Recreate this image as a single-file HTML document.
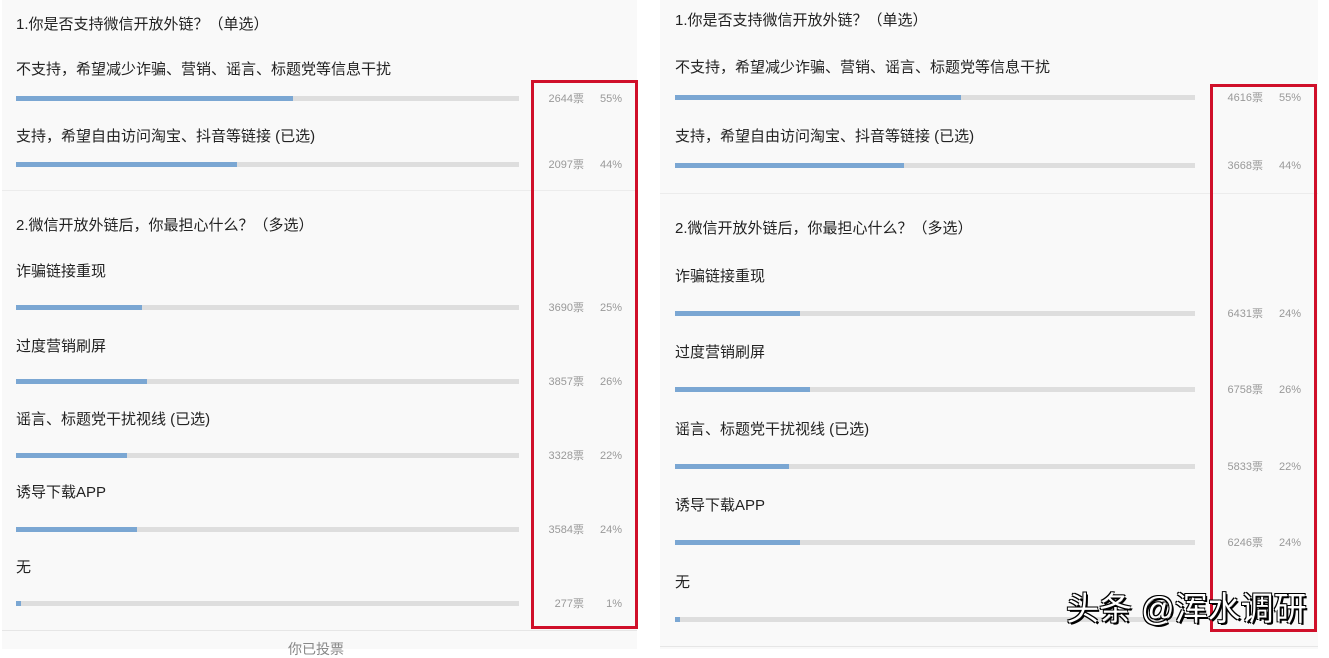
<!DOCTYPE html><html><head><meta charset="utf-8"><style>
body{margin:0;width:1329px;height:649px;background:#fff;position:relative;overflow:hidden;font-family:"Liberation Sans","Noto Sans CJK SC",sans-serif}
.p{position:absolute;background:#f9f9f9;top:0;height:649px}
.t{position:absolute;font-size:15px;color:#222;line-height:18px;white-space:nowrap}
.b{position:absolute;height:5px;background:#dedede}
.b i{display:block;height:5px;background:#7ba7d3}
.s{position:absolute;font-size:11px;color:#999;white-space:nowrap;line-height:12px;width:80px}
.s span{position:absolute;top:0}
.s .c{right:38px}.s .q{right:0}
.sep{position:absolute;height:1px;background:#ececec}
.r{position:absolute;border:3px solid #d0102a;box-sizing:border-box}
</style></head><body>
<div class="p" style="left:2px;width:635px"></div>
<div class="p" style="left:660px;width:658px"></div>
<div class="sep" style="left:2px;width:635px;top:190px"></div>
<div class="sep" style="left:2px;width:635px;top:630px;background:#e6e6e6"></div>
<div class="sep" style="left:660px;width:658px;top:193px"></div>
<div class="sep" style="left:660px;width:658px;top:646px;background:#e6e6e6"></div>

<div class="t" style="left:16px;top:16px">1.你是否支持微信开放外链？（单选）</div>
<div class="t" style="left:16px;top:61px">不支持，希望减少诈骗、营销、谣言、标题党等信息干扰</div>
<div class="b" style="left:16px;top:96px;width:503px"><i style="width:277px"></i></div>
<div class="s" style="left:542px;top:93px"><span class="c">2644票</span><span class="q">55%</span></div>
<div class="t" style="left:16px;top:128px">支持，希望自由访问淘宝、抖音等链接 (已选)</div>
<div class="b" style="left:16px;top:162px;width:503px"><i style="width:221px"></i></div>
<div class="s" style="left:542px;top:159px"><span class="c">2097票</span><span class="q">44%</span></div>
<div class="t" style="left:16px;top:217px">2.微信开放外链后，你最担心什么？（多选）</div>
<div class="t" style="left:16px;top:263px">诈骗链接重现</div>
<div class="b" style="left:16px;top:305px;width:503px"><i style="width:126px"></i></div>
<div class="s" style="left:542px;top:302px"><span class="c">3690票</span><span class="q">25%</span></div>
<div class="t" style="left:16px;top:338px">过度营销刷屏</div>
<div class="b" style="left:16px;top:379px;width:503px"><i style="width:131px"></i></div>
<div class="s" style="left:542px;top:376px"><span class="c">3857票</span><span class="q">26%</span></div>
<div class="t" style="left:16px;top:411px">谣言、标题党干扰视线 (已选)</div>
<div class="b" style="left:16px;top:453px;width:503px"><i style="width:111px"></i></div>
<div class="s" style="left:542px;top:450px"><span class="c">3328票</span><span class="q">22%</span></div>
<div class="t" style="left:16px;top:484px">诱导下载APP</div>
<div class="b" style="left:16px;top:527px;width:503px"><i style="width:121px"></i></div>
<div class="s" style="left:542px;top:524px"><span class="c">3584票</span><span class="q">24%</span></div>
<div class="t" style="left:16px;top:559px">无</div>
<div class="b" style="left:16px;top:601px;width:503px"><i style="width:5px"></i></div>
<div class="s" style="left:542px;top:598px"><span class="c">277票</span><span class="q">1%</span></div>
<div class="t" style="left:288px;top:640px;color:#888;font-size:14px">你已投票</div>
<div class="r" style="left:531px;top:80px;width:107px;height:549px"></div>

<div class="t" style="left:675px;top:12px">1.你是否支持微信开放外链？（单选）</div>
<div class="t" style="left:675px;top:59px">不支持，希望减少诈骗、营销、谣言、标题党等信息干扰</div>
<div class="b" style="left:675px;top:95px;width:520px"><i style="width:286px"></i></div>
<div class="s" style="left:1221px;top:92px"><span class="c">4616票</span><span class="q">55%</span></div>
<div class="t" style="left:675px;top:128px">支持，希望自由访问淘宝、抖音等链接 (已选)</div>
<div class="b" style="left:675px;top:163px;width:520px"><i style="width:229px"></i></div>
<div class="s" style="left:1221px;top:160px"><span class="c">3668票</span><span class="q">44%</span></div>
<div class="t" style="left:675px;top:220px">2.微信开放外链后，你最担心什么？（多选）</div>
<div class="t" style="left:675px;top:268px">诈骗链接重现</div>
<div class="b" style="left:675px;top:311px;width:520px"><i style="width:125px"></i></div>
<div class="s" style="left:1221px;top:308px"><span class="c">6431票</span><span class="q">24%</span></div>
<div class="t" style="left:675px;top:344px">过度营销刷屏</div>
<div class="b" style="left:675px;top:387px;width:520px"><i style="width:135px"></i></div>
<div class="s" style="left:1221px;top:384px"><span class="c">6758票</span><span class="q">26%</span></div>
<div class="t" style="left:675px;top:421px">谣言、标题党干扰视线 (已选)</div>
<div class="b" style="left:675px;top:464px;width:520px"><i style="width:114px"></i></div>
<div class="s" style="left:1221px;top:461px"><span class="c">5833票</span><span class="q">22%</span></div>
<div class="t" style="left:675px;top:497px">诱导下载APP</div>
<div class="b" style="left:675px;top:540px;width:520px"><i style="width:125px"></i></div>
<div class="s" style="left:1221px;top:537px"><span class="c">6246票</span><span class="q">24%</span></div>
<div class="t" style="left:675px;top:574px">无</div>
<div class="b" style="left:675px;top:617px;width:520px"><i style="width:5px"></i></div>
<div class="r" style="left:1210px;top:84px;width:107px;height:548px"></div>
<div style="position:absolute;left:1066px;top:590px;font-size:33px;line-height:38px;color:#fff;font-family:'Liberation Sans','Noto Sans CJK SC',sans-serif;text-shadow:-1px -1px 0 #000,1px -1px 0 #000,-1px 1px 0 #000,2px 2px 0 #000;white-space:nowrap">头条 @浑水调研</div>
</body></html>
